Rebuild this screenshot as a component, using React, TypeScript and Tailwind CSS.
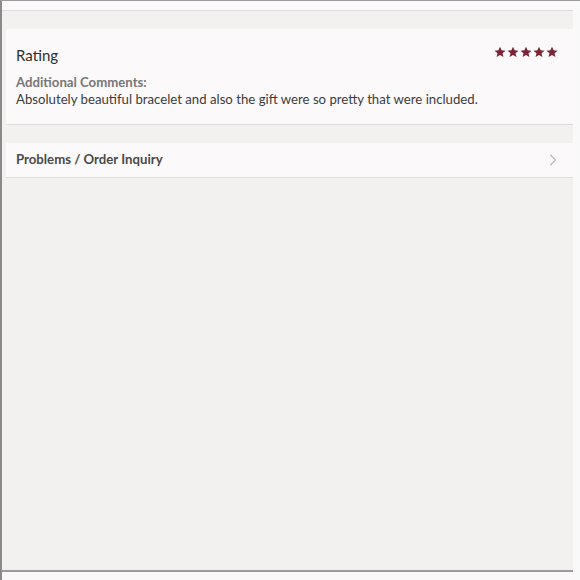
import React from 'react';
import { ChevronRight } from 'lucide-react';

const Star = () => (
  <svg width="12" height="12" viewBox="0 0 24 24" aria-hidden="true">
    <path
      d="M12 1.5l3.2 7.2 7.8.6-6 5.1 1.9 7.6L12 17.9l-6.9 4.1 1.9-7.6-6-5.1 7.8-.6z"
      fill="#7a2535"
    />
  </svg>
);

const RatingCard = () => (
  <div className="ml-1 bg-[#fbf9fa] border-b border-[#dedcdc] pl-[10px] pr-[15px] pt-[13px] pb-[16px]">
    <div className="flex items-start justify-between">
      <h2 className="text-[15px] leading-[22px] text-[#2e2e2e] mt-[2px]">Rating</h2>
      <div className="flex gap-[1px] mt-[4px]">
        {[0, 1, 2, 3, 4].map((i) => (
          <Star key={i} />
        ))}
      </div>
    </div>
    <p className="mt-[8px] text-[13.2px] leading-[17px] font-bold text-[#777]">Additional Comments:</p>
    <p className="text-[13.2px] leading-[17px] text-[#3c3c3c]">
      Absolutely beautiful bracelet and also the gift were so pretty that were included.
    </p>
  </div>
);

export default function App() {
  return (
    <div
      className="w-[580px] h-[580px] flex border-t border-[#9a9a9a] bg-[#faf8f9]"
      style={{ fontFamily: 'Lato, "Open Sans", sans-serif' }}
    >
      <div className="w-[2px] bg-[#8a8a8a]" />
      <div className="w-[571px] flex flex-col">
        <div className="h-[9px] bg-[#faf8f9]" />
        <div className="h-[1px] bg-[#dcdada]" />
        <div className="flex-1 bg-[#f2f1f0] pt-[18px] flex flex-col">
          <RatingCard />
          <div className="h-[18px]" />
          <div className="ml-1 bg-[#fbf9fa] border-b border-[#dedcdc] h-[35px] pl-[10px] pr-[10px] flex items-center justify-between">
            <span className="text-[13.2px] font-bold text-[#4a4a4a]">Problems / Order Inquiry</span>
            <ChevronRight size={20} strokeWidth={1.3} className="text-[#b8b8b8]" />
          </div>
        </div>
        <div className="h-[2px] bg-[#9c9c9c]" />
        <div className="h-[8px] bg-[#faf8f9]" />
      </div>
      <div className="flex-1 bg-[#faf9fa]" />
    </div>
  );
}
